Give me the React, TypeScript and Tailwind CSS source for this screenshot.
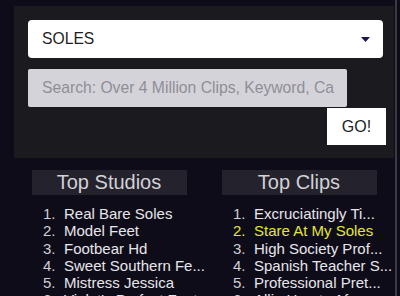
const studios = [
  "Real Bare Soles",
  "Model Feet",
  "Footbear Hd",
  "Sweet Southern Fe...",
  "Mistress Jessica",
  "Violet's Perfect Feet",
];

const clips = [
  "Excruciatingly Ti...",
  "Stare At My Soles",
  "High Society Prof...",
  "Spanish Teacher S...",
  "Professional Pret...",
  "Allie Hearts Af...",
];

function TopList({ title, items, active }: { title: string; items: string[]; active?: number }) {
  return (
    <div className="flex flex-col min-w-0">
      <div className="mx-auto w-[155px] h-[25px] bg-[#24222c] text-center text-[20px] leading-[25px] text-[#d2d1d6]">
        {title}
      </div>
      <ol className="mt-[10px]">
        {items.map((item, i) => (
          <li
            key={item}
            className={`flex whitespace-nowrap text-[15px] leading-[17.25px] pl-[29px] ${
              i === active ? "text-[#e4e43a]" : "text-[#e6e6ea]"
            }`}
          >
            <span className={`w-[21px] shrink-0 ${i === active ? "" : "text-[#cfcfd4]"}`}>{i + 1}.</span>
            <span className="shrink-0">{item}</span>
          </li>
        ))}
      </ol>
    </div>
  );
}

export default function App() {
  return (
    <div className="relative h-[296px] overflow-hidden bg-[#0f0c19] [font-family:'Liberation_Sans',Arial,sans-serif]">
      <div className="w-[394px] pl-[14px] pt-[6px]">
        {/* Search panel */}
        <div className="h-[152px] bg-[#1b1a1f] pt-[14px] pl-[14px] pr-[11px]">
          <div className="flex h-[38px] items-center justify-between rounded-[4px] bg-white pl-[14px] pr-[13px] text-[15.7px] text-[#1e1e24]">
            <span>SOLES</span>
            <svg width="9" height="5" viewBox="0 0 9 5">
              <path d="M0 0h9L4.5 5z" fill="#1d1458" />
            </svg>
          </div>
          <div className="mt-[11px] flex h-[38px] w-[319px] items-center rounded-[2px] bg-[#d4d3d9] pl-[14px] text-[15.7px] text-[#8f8e97] whitespace-nowrap overflow-hidden">
            Search: Over 4 Million Clips, Keyword, Ca
          </div>
          <div className="flex justify-end">
            <button className="mr-[-3px] mt-[1px] h-[37px] w-[59px] bg-white text-[16px] text-[#222228]">
              GO!
            </button>
          </div>
        </div>

        {/* Top lists */}
        <div className="mt-[12px] grid grid-cols-2">
          <TopList title="Top Studios" items={studios} />
          <TopList title="Top Clips" items={clips} active={1} />
        </div>
      </div>

      <div className="absolute right-[3px] top-0 bottom-0 w-[2px] bg-[#3b3a43]" />
    </div>
  );
}
